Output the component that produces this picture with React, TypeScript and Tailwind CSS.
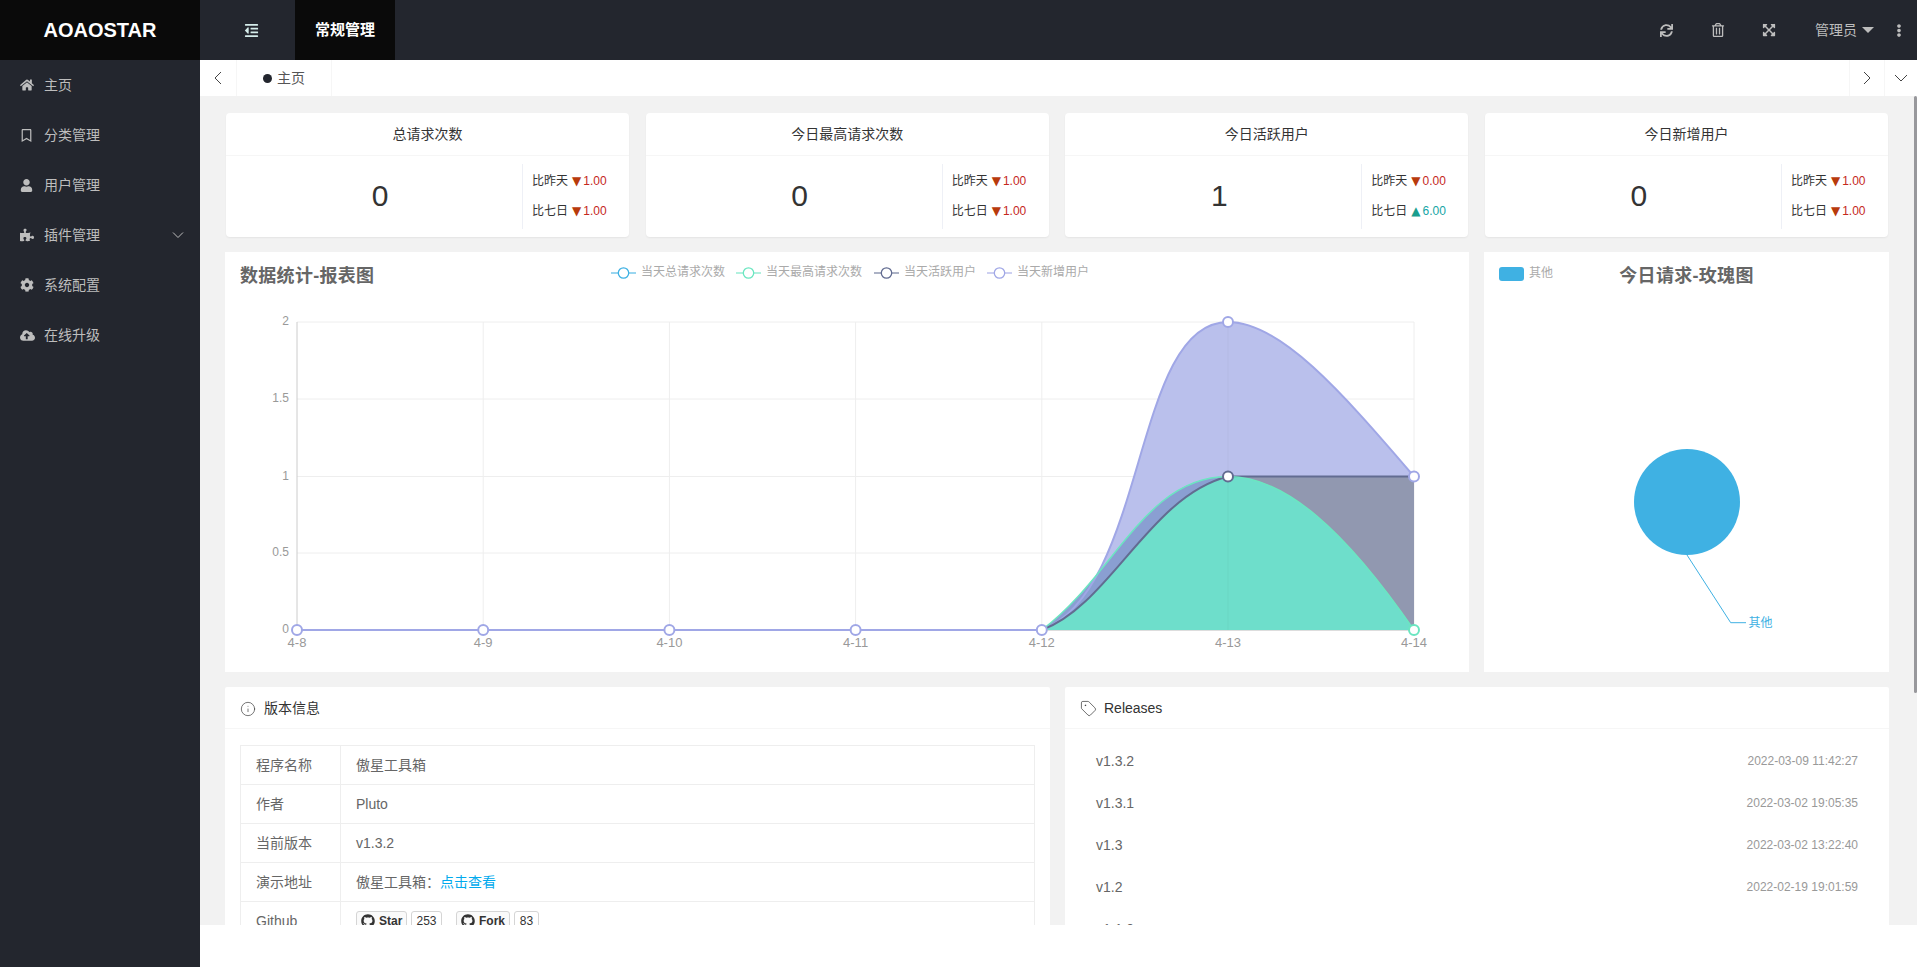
import React from "react";
import { FaHome, FaRegBookmark, FaUser, FaPuzzlePiece, FaCog, FaCloudUploadAlt, FaOutdent, FaSync, FaRegTrashAlt, FaExpandArrowsAlt, FaEllipsisV, FaGithub } from "react-icons/fa";
import { Info, Tag } from "lucide-react";

const menu = [
  { icon: FaHome, label: "主页", size: 14 },
  { icon: FaRegBookmark, label: "分类管理", size: 13 },
  { icon: FaUser, label: "用户管理", size: 13 },
  { icon: FaPuzzlePiece, label: "插件管理", size: 14, more: true },
  { icon: FaCog, label: "系统配置", size: 14 },
  { icon: FaCloudUploadAlt, label: "在线升级", size: 15 },
];

function Chevron({ d }: { d: string }) {
  return (
    <svg width="14" height="14" viewBox="0 0 14 14" fill="none" stroke="#444" strokeWidth="1">
      <path d={d} />
    </svg>
  );
}

function Delta({ label, value, up }: { label: string; value: string; up?: boolean }) {
  return (
    <div className="flex h-[30px] items-center text-[12px] text-[#333] whitespace-nowrap">
      <span>{label}</span>
      <span className={up ? "ml-[4px] mr-[2px] font-['DejaVu_Sans',sans-serif] text-[#1a9e8e]" : "ml-[4px] mr-[2px] font-['DejaVu_Sans',sans-serif] text-[#b83a0c]"}>{up ? "▲" : "▼"}</span>
      <span className={up ? "text-[#15a5a5]" : "text-[#c5281c]"}>{value}</span>
    </div>
  );
}

function StatCard({ title, num, a, b, bUp }: { title: string; num: string; a: string; b: string; bUp?: boolean }) {
  return (
    <div className="h-[124px] rounded-[4px] bg-white shadow-[0_1px_2px_0_rgba(0,0,0,0.06)]">
      <div className="flex h-[43px] items-center justify-center border-b border-[#f6f6f6] pt-px text-[14px] text-[#333]">{title}</div>
      <div className="flex h-[80px] items-center">
        <div className="w-[296px] pl-[12px] text-center text-[30px] leading-none text-[#333]">{num}</div>
        <div className="flex h-[65px] flex-1 flex-col justify-center border-l border-[#eef0f6] pl-[9px]">
          <Delta label="比昨天" value={a} />
          <Delta label="比七日" value={b} up={bUp} />
        </div>
      </div>
    </div>
  );
}

const legend = [
  { color: "#3fb1e3", text: "当天总请求次数", ml: "ml-0", w: "w-[84px]" },
  { color: "#6be6c1", text: "当天最高请求次数", ml: "ml-[11px]", w: "w-[96px]" },
  { color: "#626c91", text: "当天活跃用户", ml: "ml-[12px]", w: "w-[72px]" },
  { color: "#a0a7e6", text: "当天新增用户", ml: "ml-[11px]", w: "w-[72px]" },
];

function LegendIcon({ color }: { color: string }) {
  return (
    <svg width="25" height="14" viewBox="0 0 25 14">
      <line x1="0" y1="7" x2="25" y2="7" stroke={color} strokeWidth="1.5" strokeOpacity="0.7" />
      <circle cx="12.5" cy="7" r="5.2" fill="#fff" stroke={color} strokeWidth="1.3" />
    </svg>
  );
}

const xs = [297, 483.2, 669.4, 855.6, 1041.8, 1228, 1414];
const labels = ["4-8", "4-9", "4-10", "4-11", "4-12", "4-13", "4-14"];
const ys: [number, string][] = [[322, "2"], [399, "1.5"], [476.5, "1"], [553, "0.5"], [630, "0"]];

const purpleCurve = "C1148 590 1132 322 1228 322 C1280 322 1340 390 1414 476.5";
const greenLeft = "C1115 575 1145 476.5 1228 476.5";
const greenRight = "C1285 476.5 1345 530 1414 630";
const darkLeft = "C1110 605 1150 496 1228 476.5";

function LineChart() {
  return (
    <svg width="1244" height="370" viewBox="225 302 1244 370" className="block">
      {ys.map(([y]) => (
        <line key={y} x1="297" x2="1414" y1={y} y2={y} stroke="#eeeeee" strokeWidth="1" />
      ))}
      {xs.slice(1).map((x) => (
        <line key={x} x1={x} x2={x} y1="322" y2="630" stroke="#eeeeee" strokeWidth="1" />
      ))}
      <line x1="297" x2="297" y1="322" y2="630" stroke="#cccccc" strokeWidth="1" />
      <line x1="297" x2="1414" y1="630.5" y2="630.5" stroke="#dddddd" strokeWidth="1" />

      <path d={`M1041.8 630 ${purpleCurve} L1414 630 Z`} fill="#bac0ec" />
      <path d={`M1041.8 630 ${greenLeft} L1228 630 Z`} fill="#8a9fd2" />
      <path d="M1228 476.5 L1414 476.5 L1414 630 L1228 630 Z" fill="#9198b0" />
      <path d={`M1041.8 630 ${darkLeft} L1228 630 Z`} fill="#6edecb" />
      <path d={`M1228 476.5 ${greenRight} L1228 630 Z`} fill="#6edecb" />
      <line x1="1228" x2="1228" y1="322" y2="630" stroke="#000" strokeOpacity="0.03" />

      <path d={`M297 630 L1041.8 630 ${purpleCurve}`} fill="none" stroke="#a0a7e6" strokeWidth="2" />
      <path d={`M1041.8 630 ${darkLeft} L1414 476.5`} fill="none" stroke="#626c91" strokeWidth="2" />
      <path d={`M1041.8 630 ${greenLeft} ${greenRight}`} fill="none" stroke="#6be6c1" strokeWidth="1.5" />

      {xs.slice(0, 5).map((x) => (
        <circle key={x} cx={x} cy="630" r="5" fill="#fff" stroke="#a0a7e6" strokeWidth="2" />
      ))}
      <circle cx="1228" cy="322" r="5" fill="#fff" stroke="#a0a7e6" strokeWidth="2" />
      <circle cx="1228" cy="476.5" r="5" fill="#fff" stroke="#626c91" strokeWidth="2" />
      <circle cx="1414" cy="476.5" r="5" fill="#fff" stroke="#a0a7e6" strokeWidth="2" />
      <circle cx="1414" cy="630" r="5" fill="#fff" stroke="#6be6c1" strokeWidth="2" />

      {ys.map(([y, t]) => (
        <text key={t} x="289" y={y} textAnchor="end" dominantBaseline="middle" fontSize="12" fill="#999999">{t}</text>
      ))}
      {xs.map((x, i) => (
        <text key={x} x={x} y="646.5" textAnchor="middle" fontSize="13" fill="#999999">{labels[i]}</text>
      ))}
    </svg>
  );
}

function RoseChart() {
  return (
    <svg width="405" height="370" viewBox="1484 302 405 370" className="block">
      <circle cx="1687" cy="502" r="53" fill="#3fb1e3" />
      <path d="M1687 555 L1730.7 622.7 L1746 622.7" fill="none" stroke="#3fb1e3" strokeWidth="1" />
      <text x="1748.5" y="626.5" fontSize="12" fill="#3fb1e3">其他</text>
    </svg>
  );
}

const info: [string, React.ReactNode][] = [
  ["程序名称", "傲星工具箱"],
  ["作者", "Pluto"],
  ["当前版本", "v1.3.2"],
  ["演示地址", <>傲星工具箱：<span className="text-[#01aaed]">点击查看</span></>],
  ["Github", (
    <div className="flex items-center text-[12px] font-bold text-[#333]">
      <span className="flex h-[20px] w-[51px] items-center gap-[4px] rounded-[3px] border border-[#d5d5d5] bg-[#fafafa] pl-[4px]"><FaGithub size={14} />Star</span>
      <span className="ml-[4px] flex h-[20px] w-[31px] items-center justify-center rounded-[3px] border border-[#d5d5d5] font-normal">253</span>
      <span className="ml-[14px] flex h-[20px] w-[54px] items-center gap-[4px] rounded-[3px] border border-[#d5d5d5] bg-[#fafafa] pl-[4px]"><FaGithub size={14} />Fork</span>
      <span className="ml-[4px] flex h-[20px] w-[25px] items-center justify-center rounded-[3px] border border-[#d5d5d5] font-normal">83</span>
    </div>
  )],
];

const releases = [
  ["v1.3.2", "2022-03-09 11:42:27"],
  ["v1.3.1", "2022-03-02 19:05:35"],
  ["v1.3", "2022-03-02 13:22:40"],
  ["v1.2", "2022-02-19 19:01:59"],
  ["v1.1.0", ""],
];

export default function App() {
  return (
    <div className="flex h-screen w-full overflow-hidden bg-white font-['Liberation_Sans','Noto_Sans_CJK_SC',sans-serif]">
      <aside className="flex w-[200px] shrink-0 flex-col bg-[#23262e]">
        <div className="flex h-[60px] items-center justify-center bg-[#0a0a0a] text-[20px] font-bold text-white">AOAOSTAR</div>
        <nav>
          {menu.map((m) => {
            const Icon = m.icon;
            return (
              <div key={m.label} className="flex h-[50px] items-center text-[14px] text-[#bdbdbd]">
                <span className="flex w-[44px] justify-start pl-[20px]"><Icon size={m.size} /></span>
                <span className="flex-1">{m.label}</span>
                {m.more && (
                  <svg width="12" height="12" viewBox="0 0 12 12" fill="none" stroke="#bdbdbd" strokeWidth="1" className="mr-[16px]">
                    <path d="M1 3.5 L6 8.5 L11 3.5" />
                  </svg>
                )}
              </div>
            );
          })}
        </nav>
      </aside>

      <div className="flex min-w-0 flex-1 flex-col">
        <header className="flex h-[60px] shrink-0 items-center bg-[#23262e]">
          <div className="flex h-full w-[95px] items-center pl-[44px] text-[#d5ecea]"><FaOutdent size={15} /></div>
          <div className="flex h-full w-[100px] items-center justify-center bg-[#0a0a0a] text-[15px] font-bold text-white">常规管理</div>
          <div className="flex flex-1 items-center justify-end pr-[13px] text-[#bdbdbd]">
            <span className="flex w-[51.5px] justify-center"><FaSync size={13} /></span>
            <span className="flex w-[51.5px] justify-center"><FaRegTrashAlt size={14} /></span>
            <span className="flex w-[51.5px] justify-center"><FaExpandArrowsAlt size={14} /></span>
            <span className="ml-[20px] text-[14px]">管理员</span>
            <span className="ml-[5px] h-0 w-0 border-x-[6px] border-t-[6px] border-x-transparent border-t-[#bdbdbd]" />
            <span className="ml-[20px] flex w-[10px] justify-center"><FaEllipsisV size={13} /></span>
          </div>
        </header>

        <div className="flex h-[36px] shrink-0 items-stretch bg-white">
          <div className="flex w-[37px] items-center justify-center border-r border-[#f6f6f6]"><Chevron d="M10 1 L4 7 L10 13" /></div>
          <div className="flex w-[95px] items-center border-r border-[#f6f6f6] pl-[26px] text-[14px] text-[#555]">
            <span className="mr-[5px] h-[9px] w-[9px] rounded-full bg-[#23262e]" />主页
          </div>
          <div className="flex-1" />
          <div className="flex w-[35px] items-center justify-center border-l border-[#f6f6f6]"><Chevron d="M4 1 L10 7 L4 13" /></div>
          <div className="flex w-[33px] items-center justify-center border-l border-[#f6f6f6]"><Chevron d="M1 4 L7 10 L13 4" /></div>
        </div>

        <main className="relative h-[829px] shrink-0 overflow-hidden bg-[#f2f2f2] pl-[25px] pr-[28px] pt-[17px]">
          <div className="absolute right-0 top-0 h-[597px] w-[3px] rounded-[2px] bg-[#98989c]" />

          <div className="mx-px grid grid-cols-4 gap-[16.5px]">
            <StatCard title="总请求次数" num="0" a="1.00" b="1.00" />
            <StatCard title="今日最高请求次数" num="0" a="1.00" b="1.00" />
            <StatCard title="今日活跃用户" num="1" a="0.00" b="6.00" bUp />
            <StatCard title="今日新增用户" num="0" a="1.00" b="1.00" />
          </div>

          <div className="mt-[15px] flex h-[420px] gap-[15px]">
            <section className="w-[1244px] shrink-0 bg-white">
              <div className="flex h-[50px] items-start px-[15px]">
                <h2 className="mt-[12px] w-[371px] shrink-0 text-[18px] font-bold leading-[24px] tracking-[0.3px] text-[#666]">数据统计-报表图</h2>
                <div className="mt-[12px] flex items-center">
                  {legend.map((l) => (
                    <div key={l.text} className={`flex items-center ${l.ml}`}>
                      <LegendIcon color={l.color} />
                      <span className={`ml-[5px] -translate-y-px text-[12px] text-[#aaa] ${l.w}`}>{l.text}</span>
                    </div>
                  ))}
                </div>
              </div>
              <LineChart />
            </section>
            <section className="w-[405px] shrink-0 bg-white">
              <div className="grid h-[50px] grid-cols-[1fr_auto_1fr] items-start px-[15px]">
                <div className="mt-[15px] flex items-center">
                  <span className="h-[14px] w-[25px] rounded-[3px] bg-[#3fb1e3]" />
                  <span className="ml-[5px] -translate-y-px text-[12px] leading-[14px] text-[#aaa]">其他</span>
                </div>
                <h2 className="mt-[12px] text-[18px] font-bold leading-[24px] tracking-[0.3px] text-[#666]">今日请求-玫瑰图</h2>
                <div />
              </div>
              <RoseChart />
            </section>
          </div>

          <div className="mt-[15px] flex gap-[15px]">
            <section className="h-[400px] w-[825px] shrink-0 rounded-[2px] bg-white">
              <div className="flex h-[42px] items-center gap-[8px] border-b border-[#f6f6f6] pl-[15px] pt-[2px] text-[14px] text-[#333]">
                <Info size={16} strokeWidth={1} />版本信息
              </div>
              <div className="px-[15px] pt-[16px]">
                <table className="w-full border-collapse text-[14px] text-[#666]">
                  <tbody>
                    {info.map(([k, v]) => (
                      <tr key={k}>
                        <td className="h-[39px] w-[100px] border border-[#eeeeee] pl-[15px]">{k}</td>
                        <td className="h-[39px] border border-[#eeeeee] pl-[15px]">{v}</td>
                      </tr>
                    ))}
                  </tbody>
                </table>
              </div>
            </section>
            <section className="h-[400px] w-[824px] shrink-0 rounded-[2px] bg-white">
              <div className="flex h-[42px] items-center gap-[7px] border-b border-[#f6f6f6] pl-[15px] pt-[2px] text-[14px] text-[#333]">
                <Tag size={17} strokeWidth={1} />Releases
              </div>
              <ul className="pl-[31px] pr-[31px] pt-[11px]">
                {releases.map(([v, d]) => (
                  <li key={v} className="flex h-[42px] items-center justify-between">
                    <span className="text-[14px] text-[#666]">{v}</span>
                    <span className="text-[12px] text-[#999]">{d}</span>
                  </li>
                ))}
              </ul>
            </section>
          </div>
        </main>
      </div>
    </div>
  );
}
